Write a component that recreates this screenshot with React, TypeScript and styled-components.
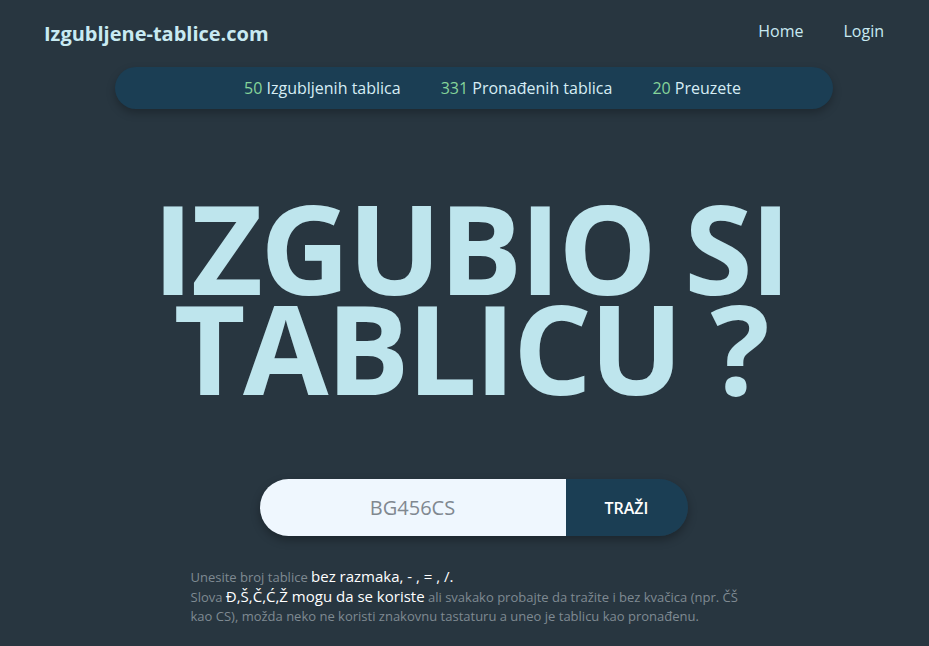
import React from "react";
import styled, { createGlobalStyle } from "styled-components";

const Global = createGlobalStyle`
  html, body { margin: 0; padding: 0; background: #283640; }
  body { font-family: "Open Sans", "Liberation Sans", sans-serif; }
  * { box-sizing: border-box; }
`;

const Page = styled.div`
  min-height: 646px;
  background: #283640;
  display: flex;
  flex-direction: column;
  align-items: center;
`;

const Header = styled.header`
  width: 100%;
  display: flex;
  align-items: center;
  justify-content: space-between;
  padding: 14px 45px 0 44px;
  height: 52px;
`;

const Logo = styled.a`
  font-size: 20px;
  font-weight: 700;
  color: #c8eaf2;
  text-decoration: none;
  letter-spacing: 0;
`;

const Nav = styled.nav`
  display: flex;
  gap: 40px;
  margin-top: -5px;
`;

const NavLink = styled.a`
  color: #c8eaf2;
  font-size: 16px;
  text-decoration: none;
`;

const StatsBar = styled.div`
  margin-top: 15px;
  margin-left: 18px;
  width: 718px;
  height: 42px;
  border-radius: 21px;
  background: #1b3e54;
  box-shadow: 0 4px 8px rgba(0, 0, 0, 0.25);
  display: flex;
  align-items: center;
  justify-content: center;
  gap: 40px;
  padding-left: 38px;
`;

const Stat = styled.span`
  color: #d6edf4;
  font-size: 16px;
`;

const Num = styled.span`
  color: #86d49a;
`;

const Headline = styled.h1`
  margin: 88px 0 0 12px;
  font-size: 124px;
  font-weight: 700;
  line-height: 100px;
  color: #bee5ed;
  text-align: center;
  letter-spacing: -2.5px;
`;

const SearchForm = styled.form`
  margin-top: 82px;
  margin-left: 18px;
  display: flex;
  height: 57px;
  border-radius: 29px;
  box-shadow: 0 4px 10px rgba(0, 0, 0, 0.3);
  overflow: hidden;
`;

const SearchInput = styled.input`
  width: 306px;
  border: none;
  outline: none;
  background: #eff7fe;
  font-family: inherit;
  font-size: 20px;
  text-align: center;
  color: #333;
  padding: 0;
  &::placeholder { color: #808890; }
`;

const SearchButton = styled.button`
  width: 122px;
  border: none;
  background: #1b3e54;
  color: #ffffff;
  font-family: inherit;
  font-size: 16px;
  font-weight: 600;
  cursor: pointer;
`;

const Help = styled.div`
  margin-top: 31px;
  width: 560px;
  margin-left: 12px;
  font-size: 13px;
  line-height: 19px;
  color: #7f8a92;
`;

const Em = styled.span`
  color: #ffffff;
  font-size: 15px;
`;

export default function App() {
  return (
    <>
      <Global />
      <Page>
        <Header>
          <Logo href="#">Izgubljene-tablice.com</Logo>
          <Nav>
            <NavLink href="#">Home</NavLink>
            <NavLink href="#">Login</NavLink>
          </Nav>
        </Header>
        <StatsBar>
          <Stat><Num>50</Num> Izgubljenih tablica</Stat>
          <Stat><Num>331</Num> Pronađenih tablica</Stat>
          <Stat><Num>20</Num> Preuzete</Stat>
        </StatsBar>
        <Headline>
          IZGUBIO SI
          <br />
          TABLICU ?
        </Headline>
        <SearchForm onSubmit={(e) => e.preventDefault()}>
          <SearchInput placeholder="BG456CS" />
          <SearchButton type="submit">TRAŽI</SearchButton>
        </SearchForm>
        <Help>
          Unesite broj tablice <Em>bez razmaka, - , = , /.</Em>
          <br />
          Slova <Em>Đ,Š,Č,Ć,Ž mogu da se koriste</Em> ali svakako probajte da tražite i bez kvačica (npr. ČŠ kao CS), možda neko ne koristi znakovnu tastaturu a uneo je tablicu kao pronađenu.
        </Help>
      </Page>
    </>
  );
}
